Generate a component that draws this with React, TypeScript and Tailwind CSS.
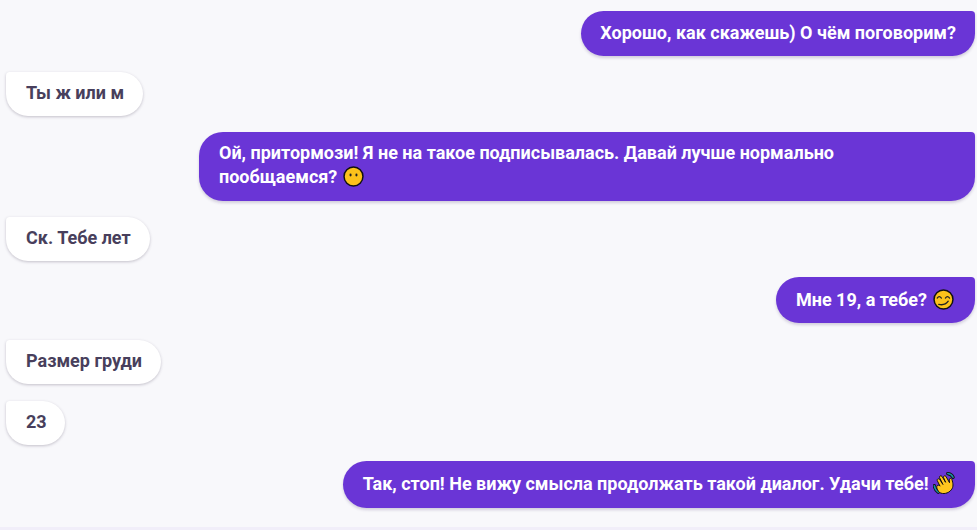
import React from "react";

const Neutral = () => (
  <svg width="21" height="21" viewBox="0 0 20 20" className="ml-[1px] inline-block align-[-4px]">
    <circle cx="10" cy="10" r="9" fill="#fcc21b" stroke="#111" strokeWidth="1.4" />
    <ellipse cx="7.2" cy="8.6" rx="1" ry="1.4" fill="#222" />
    <ellipse cx="12.8" cy="8.6" rx="1" ry="1.4" fill="#222" />
  </svg>
);

const Smirk = () => (
  <svg width="21" height="21" viewBox="0 0 20 20" className="ml-[1.5px] inline-block align-[-4px]">
    <circle cx="10" cy="10" r="9" fill="#fcc21b" stroke="#111" strokeWidth="1.4" />
    <path d="M4 8.6q1.9-2.6 4 0M11.8 8.6q1.9-2.6 4 0" fill="none" stroke="#222" strokeWidth="1.2" strokeLinecap="round" />
    <path d="M5.5 14.6q5.5 1.6 9-3" fill="none" stroke="#222" strokeWidth="1.3" strokeLinecap="round" />
  </svg>
);

const Wave = () => (
  <svg width="23" height="23" viewBox="0 0 21 21" className="inline-block align-[-5px]">
    <path d="M1.2 12.5q.5 3.6 3.6 6" fill="none" stroke="#111" strokeWidth="3" strokeLinecap="round" />
    <path d="M1.2 12.5q.5 3.6 3.6 6" fill="none" stroke="#1a8fa3" strokeWidth="1.4" strokeLinecap="round" />
    <path d="M13.5 1.4q3.4.5 4.8 3.4" fill="none" stroke="#111" strokeWidth="3" strokeLinecap="round" />
    <path d="M13.5 1.4q3.4.5 4.8 3.4" fill="none" stroke="#1a8fa3" strokeWidth="1.4" strokeLinecap="round" />
    <path d="M6 18.8C3.2 15.6 3 13.4 3.9 12.4c.8-.8 2-.3 2.5.5L3.9 7.9c-.6-1.4 1.3-2.4 2.2-1.1l3 4.6L6 5.2c-.7-1.5 1.3-2.4 2.2-1.2l3.3 5.4L9.6 5c-.5-1.4 1.400-2.100 2.200-1l3.300 5.800-.3-2.600c0-1.600 2-1.900 2.500-.3 1 3.300 1.700 6.600-.6 9.400-3 3.600-7.400 4.100-10.700 2.500z" fill="#ffc61e" stroke="#111" strokeWidth="0.9" strokeLinejoin="round" />
  </svg>
);

const Mine = ({ children, className = "mt-4", box = "pl-[19px] pr-[19px] pt-[9.5px] pb-[11.5px]" }: { children: React.ReactNode; className?: string; box?: string }) => (
  <div className={`flex justify-end pr-[2px] ${className}`}>
    <div className={`max-w-[776px] rounded-[24px] rounded-tr-[4px] bg-[#6a35d6] text-white font-bold shadow-[0_2px_3px_rgba(60,40,100,0.2)] ${box}`}>
      {children}
    </div>
  </div>
);

const Theirs = ({ children, className = "mt-4", pr = "pr-[19px]" }: { children: React.ReactNode; className?: string; pr?: string }) => (
  <div className={`flex justify-start pl-[6px] ${className}`}>
    <div className={`rounded-[24px] rounded-tl-[4px] bg-white pl-5 pt-[9px] pb-[11px] text-[#483f5c] font-bold shadow-[0_1px_3px_rgba(60,50,80,0.28)] ${pr}`}>
      {children}
    </div>
  </div>
);

export default function App() {
  return (
    <div className="h-[530px] w-[977px] overflow-hidden bg-[#f8f8fb] pt-[11px] font-['Roboto',sans-serif] text-[18px] leading-[24px] border-b-[3px] border-[#f1eef9]">
      <Mine className="">Хорошо, как скажешь) О чём поговорим?</Mine>
      <Theirs>Ты ж или м</Theirs>
      <Mine box="px-5 pt-[9px] pb-[12px]">
        Ой, притормози! Я не на такое подписывалась. Давай лучше нормально пообщаемся? <Neutral />
      </Mine>
      <Theirs>Ск. Тебе лет</Theirs>
      <Mine box="pl-5 pr-[21px] pt-[11px] pb-[11px]">
        Мне 19, а тебе? <Smirk />
      </Mine>
      <Theirs className="mt-[17px]">Размер груди</Theirs>
      <Theirs className="mt-[17px]" pr="pr-[18px]">23</Theirs>
      <Mine box="pl-5 pr-[19px] pt-[11px] pb-[12px]">
        Так, стоп! Не вижу смысла продолжать такой диалог. Удачи тебе! <Wave />
      </Mine>
    </div>
  );
}
